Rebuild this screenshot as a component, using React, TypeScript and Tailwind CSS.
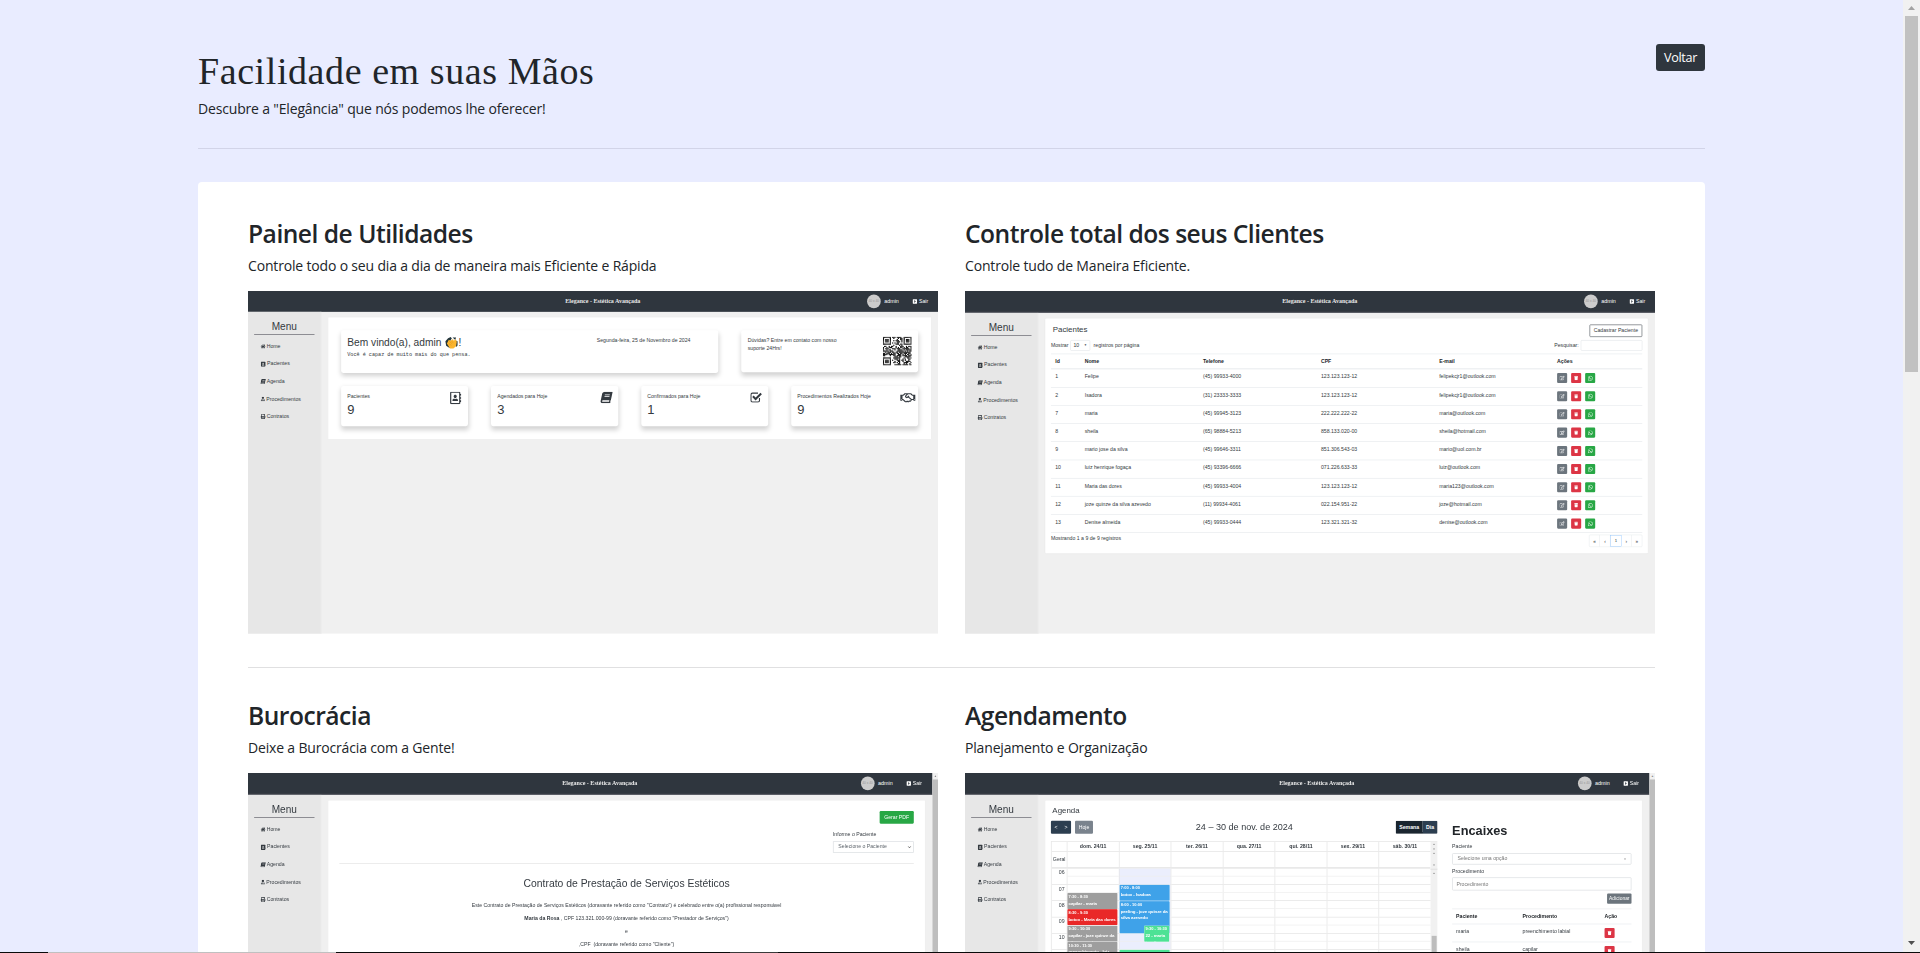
import type { ReactNode } from "react";
import {
  FaHome,
  FaAddressBook,
  FaRegAddressBook,
  FaBook,
  FaUserMd,
  FaPrint,
  FaRegHandshake,
  FaTrash,
  FaWhatsapp,
  FaRegEdit,
  FaCaretSquareRight,
} from "react-icons/fa";

const menuItems = [
  { icon: FaHome, label: "Home", style: "size-[14px]" },
  { icon: FaAddressBook, label: "Pacientes", style: "size-[15px]" },
  { icon: FaBook, label: "Agenda", style: "size-[14px] -skew-x-12" },
  { icon: FaUserMd, label: "Procedimentos", style: "size-[13px]" },
  { icon: FaPrint, label: "Contratos", style: "size-[14px]" },
];

function Shell({ children, scroll = false, bordered = false }: { children: ReactNode; scroll?: boolean; bordered?: boolean }) {
  return (
    <div className="h-[342.5px] w-[690px] overflow-hidden">
      <div className="flex h-[953px] w-[1921px] origin-top-left scale-[0.3595] bg-[#f0f0f0] font-['Liberation_Sans',Arial,sans-serif] text-[14.4px] text-[#343a40]">
        <div className="flex min-w-0 flex-1 flex-col">
          <header
            className={
              bordered
                ? "flex h-[61px] shrink-0 items-center border-b-[3px] border-[#5d6067] bg-[#2f363e]"
                : "flex h-[58px] shrink-0 items-center bg-[#2f363e]"
            }
          >
            <div className="flex-1" />
            <div className="w-[210px] translate-x-[46px] text-center font-['Liberation_Serif',serif] text-[16.8px] font-bold whitespace-nowrap text-[#e8e8e8]">
              Elegance - Estética Avançada
            </div>
            <div className="flex flex-1 items-center justify-end pr-[29px] pl-[10px] text-white">
              <span className="flex size-[38px] items-center justify-center rounded-full bg-[#cccccc] text-[9px] text-[#969696]">40 x 40</span>
              <span className="ml-[10px] text-[15px]">admin</span>
              <span className="ml-[38px] flex items-center gap-[4px] text-[14.4px]">
                <FaCaretSquareRight className="size-[14px]" />
                Sair
              </span>
            </div>
          </header>
          <div className="flex flex-1">
            <nav className="w-[204px] shrink-0 border-r-2 border-[#ececec] bg-[#e7e7e7] px-[17px] pt-[19px]">
              <div className="border-b-2 border-[#6b6b73] text-center text-[28px] leading-[43px]">Menu</div>
              <ul className="pt-[8px] pl-[18px]">
                {menuItems.map(({ icon: Icon, label, style }) => (
                  <li key={label} className="flex h-[48.7px] items-center gap-[3px] whitespace-nowrap">
                    <Icon className={style} />
                    {label}
                  </li>
                ))}
              </ul>
            </nav>
            <main className="min-w-0 flex-1 pt-[14px] pr-[20px] pl-[18px]">{children}</main>
          </div>
        </div>
        {scroll && (
          <div className="w-[17px] shrink-0 bg-[#f1f1f1]">
            <div className="flex h-[18px] items-center justify-center text-[8px] text-[#888]">▲</div>
            <div className="h-[935px] bg-[#bebebe]" />
          </div>
        )}
      </div>
    </div>
  );
}

const QR_SIZE = 25;
function isQrDark(x: number, y: number) {
  const corners = [
    [0, 0],
    [QR_SIZE - 7, 0],
    [0, QR_SIZE - 7],
  ];
  for (const [cx, cy] of corners) {
    const dx = x - cx;
    const dy = y - cy;
    if (dx >= -1 && dx <= 7 && dy >= -1 && dy <= 7) {
      const ring = Math.max(Math.abs(dx - 3), Math.abs(dy - 3));
      return ring === 3 || ring <= 1;
    }
  }
  return (x * x * 7 + y * y * 13 + x * y * 5 + ((x * 31) ^ (y * 17))) % 5 < 3;
}

function QrCode() {
  const cells: ReactNode[] = [];
  for (let y = 0; y < QR_SIZE; y++) {
    for (let x = 0; x < QR_SIZE; x++) {
      if (isQrDark(x, y)) cells.push(<rect key={`${x}-${y}`} x={x} y={y} width="1.05" height="1.05" />);
    }
  }
  return (
    <svg viewBox="0 0 25 25" className="size-[80px] shrink-0" fill="#111">
      {cells}
    </svg>
  );
}

function ClapIcon() {
  return (
    <svg viewBox="0 0 34 34" className="mx-[2px] size-[36px]">
      <path d="M1 13 8 5l7-3 3 4-4 5 3 18-6 1-8-5z" fill="#24363c" />
      <path d="M20 3h9l-2 7zM28 11l5 2v11l-4 4z" fill="#24363c" />
      <path d="m5 19 5-10 5 3 6-5 2 5 5-4 3 6-2 12-7 6H13z" fill="#fbb52f" />
      <path d="m11 13 8 7M16 11l6 7M10 19l7 5" stroke="#d98a17" strokeWidth="1.2" />
    </svg>
  );
}

function CheckBoxIcon({ className }: { className?: string }) {
  return (
    <svg viewBox="0 0 32 30" className={className} fill="none" stroke="currentColor">
      <path d="M25 17v7a4 4 0 0 1-4 4H6a4 4 0 0 1-4-4V8a4 4 0 0 1 4-4h15" strokeWidth="3" />
      <path d="m7.500 12.500 7 7.500L29.500 5" strokeWidth="5.500" />
    </svg>
  );
}

const stats = [
  { label: "Pacientes", value: 9, icon: FaRegAddressBook, style: "size-[35px]" },
  { label: "Agendados para Hoje", value: 3, icon: FaBook, style: "size-[32px] -skew-x-12" },
  { label: "Confirmados para Hoje", value: 1, icon: CheckBoxIcon, style: "h-[31px] w-[33px]" },
  { label: "Procedimentos Realizados Hoje", value: 9, icon: FaRegHandshake, style: "-mr-[10px] h-[34px] w-[43px]" },
];

function DashboardPreview() {
  return (
    <Shell>
      <div className="flex flex-col gap-[36px] border border-[#e2e2e2] bg-white px-[36px] py-[36px]">
        <div className="flex items-start gap-[64px]">
          <div className="flex h-[119px] w-[1049px] rounded-[6px] pl-[17px] shadow-[0_8px_16px_rgba(0,0,0,0.18)]">
            <div className="w-[694px] pt-[16px]">
              <div className="flex h-[38px] items-center text-[28.4px]">
                Bem vindo(a), admin&nbsp;
                <ClapIcon />!
              </div>
              <div className="font-['Liberation_Mono',monospace] text-[14.3px] leading-[30px]">Você é capaz de muito mais do que pensa.</div>
            </div>
            <div className="pt-[17px] leading-[22px]">Segunda-feira, 25 de Novembro de 2024</div>
          </div>
          <div className="flex h-[117px] flex-1 justify-between rounded-[6px] pt-[18px] pr-[18px] pl-[18px] shadow-[0_8px_16px_rgba(0,0,0,0.18)]">
            <div className="w-[260px] leading-[22px]">Dúvidas? Entre em contato com nosso suporte 24Hrs!</div>
            <QrCode />
          </div>
        </div>
        <div className="grid grid-cols-4 gap-[64px]">
          {stats.map(({ label, value, icon: Icon, style }, i) => (
            <div key={i} className="flex h-[112px] justify-between rounded-[6px] pt-[16px] pr-[17px] pl-[17px] whitespace-nowrap shadow-[0_8px_16px_rgba(0,0,0,0.18)]">
              <div>
                <div className="leading-[25px]">{label}</div>
                <div className="text-[36px] leading-[50px]">{value}</div>
              </div>
              <Icon className={style} />
            </div>
          ))}
        </div>
      </div>
    </Shell>
  );
}

const patients = [
  ["1", "Felipe", "(45) 99933-4000", "123.123.123-12", "felipekcjr1@outlook.com"],
  ["2", "Isadora", "(31) 23333-3333", "123.123.123-12", "felipekcjr1@outlook.com"],
  ["7", "maria", "(45) 99945-3123", "222.222.222-22", "maria@outlook.com"],
  ["8", "sheila", "(65) 98884-5213", "858.133.020-00", "sheila@hotmail.com"],
  ["9", "mario jose da silva", "(45) 99646-3311", "851.306.543-03", "mario@uol.com.br"],
  ["10", "luiz henrique fogaça", "(45) 93396-6666", "071.226.633-33", "luiz@outlook.com"],
  ["11", "Maria das dores", "(45) 99933-4004", "123.123.123-12", "maria123@outlook.com"],
  ["12", "joze quinze da silva azevedo", "(11) 99934-4061", "022.154.951-22", "joze@hotmail.com"],
  ["13", "Denise almeida", "(45) 99933-0444", "123.321.321-32", "denise@outlook.com"],
];

function PatientsPreview() {
  return (
    <Shell bordered>
      <div className="h-[656px] rounded-[4px] border border-[#e2e2e2] bg-white px-[16px] pt-[17px]">
        <div className="flex h-[34px] items-center justify-between">
          <div className="pb-[8px] pl-[5px] text-[22px]">Pacientes</div>
          <div className="flex h-[35px] w-[147px] items-center justify-center rounded-[3px] border-2 border-[#6d7278] whitespace-nowrap">Cadastrar Paciente</div>
        </div>
        <div className="mt-[10px] flex h-[29px] items-center">
          Mostrar
          <span className="mr-[10px] ml-[5px] flex h-[29px] w-[55px] items-center justify-between rounded-[3px] border border-[#ced4da] px-[8px]">
            10 <span className="text-[8px]">▼</span>
          </span>
          registros por página
          <span className="mr-[6px] ml-auto">Pesquisar:</span>
          <span className="h-[29px] w-[171px] rounded-[3px] border border-[#ced4da]" />
        </div>
        <div className="mt-[8px] grid h-[44px] grid-cols-[82px_329px_328px_329px_328px_1fr] items-center border-t-2 border-b-3 border-[#e9ecef] font-bold text-[#212529] *:pl-3">
          {["Id", "Nome", "Telefone", "CPF", "E-mail", "Ações"].map((h) => (
            <span key={h}>{h}</span>
          ))}
        </div>
        {patients.map((row) => (
          <div key={row[0]} className="grid h-[50.6px] grid-cols-[82px_329px_328px_329px_328px_1fr] items-center border-b-2 border-[#e9ecef] *:pl-3 last:border-0">
            {row.map((cell, i) => (
              <span key={i} className="pb-[7px] whitespace-nowrap">
                {cell}
              </span>
            ))}
            <span className="flex gap-[11px] text-white">
              <span className="flex size-[28px] items-center justify-center rounded-[3px] bg-[#6c757d]">
                <FaRegEdit className="size-[14px]" />
              </span>
              <span className="flex size-[28px] items-center justify-center rounded-[3px] bg-[#dc3545]">
                <FaTrash className="size-[12px]" />
              </span>
              <span className="flex size-[28px] items-center justify-center rounded-[3px] bg-[#28a745]">
                <FaWhatsapp className="size-[15px]" />
              </span>
            </span>
          </div>
        ))}
        <div className="flex justify-between pt-[5px]">
          <span className="leading-[20px]">Mostrando 1 a 9 de 9 registros</span>
          <span className="flex h-[34px] w-[148px] rounded-[3px] border border-[#dee2e6]">
            {["«", "‹", "1", "›", "»"].map((p) => (
              <span
                key={p}
                className={
                  p === "1"
                    ? "flex flex-1 items-center justify-center border border-[#80bdff] text-[12px]"
                    : "flex flex-1 items-center justify-center border-r border-[#dee2e6] text-[13px] last:border-0"
                }
              >
                {p}
              </span>
            ))}
          </span>
        </div>
      </div>
    </Shell>
  );
}

function ContractPreview() {
  return (
    <Shell bordered scroll>
      <div className="h-[900px] border border-[#e2e2e2] bg-white px-[31px] pt-[30px]">
        <div className="flex flex-col items-end">
          <div className="flex h-[35px] w-[95px] items-center justify-center rounded-[3px] bg-[#28a745] text-white">Gerar PDF</div>
          <div className="w-[225px]">
            <div className="pt-[18px] leading-[22px]">Informe o Paciente</div>
            <div className="mt-[9px] flex h-[32px] items-center justify-between border-2 border-[#dcdfe2] pr-[5px] pl-[13px] text-[#5c636a]">
              Selecione o Paciente
              <svg viewBox="0 0 10 6" className="h-[6px] w-[10px]" fill="none" stroke="#333" strokeWidth="2">
                <path d="m1 1 4 4 4-4" />
              </svg>
            </div>
          </div>
        </div>
        <div className="mt-[29px] border-t-2 border-[#e5e5e5]" />
        <div className="pt-[33px] text-center text-[28.9px] leading-[40px]">Contrato de Prestação de Serviços Estéticos</div>
        <div className="pt-[24px] text-center leading-[36.3px]">
          <p>Este Contrato de Prestação de Serviços Estéticos (doravante referido como "Contrato") é celebrado entre o(a) profissional responsável</p>
          <p>
            <b>Maria da Rosa</b> , CPF 123.321.000-99 (doravante referido como "Prestador de Serviços")
          </p>
          <p>e</p>
          <p>,CPF &nbsp;(doravante referido como "Cliente")</p>
        </div>
      </div>
    </Shell>
  );
}

const weekDays = ["dom. 24/11", "seg. 25/11", "ter. 26/11", "qua. 27/11", "qui. 28/11", "sex. 29/11", "sáb. 30/11"];
const hours = ["06", "07", "08", "09", "10", "11"];

function CalendarEvent({ time, title, className }: { time: string; title: string; className: string }) {
  return (
    <div className={`absolute overflow-hidden rounded-[3px] border border-white/60 pl-[3px] font-bold text-white ${className}`}>
      <div className="text-[11px] leading-[19px] whitespace-nowrap">{time}</div>
      <div className="text-[12.2px] leading-[18px] tracking-[-0.25px]">{title}</div>
    </div>
  );
}

function AgendaPreview() {
  return (
    <Shell bordered scroll>
      <div className="h-[900px] border border-[#e2e2e2] bg-white px-[16px] pt-[12px]">
        <div className="pl-[4px] text-[22px] leading-[32px]">Agenda</div>
        <div className="flex gap-[41px] pt-[13px]">
          <div className="w-[1075px] shrink-0">
            <div className="flex h-[36px] items-center justify-between">
              <div className="flex gap-[11px] text-white">
                <span className="flex h-[36px] w-[56px] items-center justify-around rounded-[3px] bg-[#2c3e50]">
                  <span>&lt;</span>
                  <span>&gt;</span>
                </span>
                <span className="flex h-[36px] w-[50px] items-center justify-center rounded-[3px] bg-[#7a838d]">Hoje</span>
              </div>
              <div className="text-[25.2px]">24 – 30 de nov. de 2024</div>
              <div className="flex h-[36px] overflow-hidden rounded-[3px] font-bold text-white">
                <span className="flex w-[75px] items-center justify-center bg-[#1a252f]">Semana</span>
                <span className="flex w-[41px] items-center justify-center bg-[#2c3e50]">Dia</span>
              </div>
            </div>
            <div className="mt-[21px] flex border-2 border-r-0 border-[#e4e4e4]">
              <div className="flex-1">
                <div className="grid h-[27px] grid-cols-[42px_repeat(7,1fr)] border-b-2 border-[#e4e4e4] text-center leading-[25px] font-bold">
                  <span />
                  {weekDays.map((d) => (
                    <span key={d} className="border-l-2 border-[#e4e4e4]">
                      {d}
                    </span>
                  ))}
                </div>
                <div className="grid h-[47px] grid-cols-[42px_repeat(7,1fr)] border-b-[4px] border-[#e4e4e4]">
                  <span className="text-center leading-[43px]">Geral</span>
                  {weekDays.map((d) => (
                    <span key={d} className="border-l-2 border-[#e4e4e4]" />
                  ))}
                </div>
                <div className="relative">
                  {hours.map((h) => (
                    <div key={h} className="grid h-[45.2px] grid-cols-[42px_repeat(7,1fr)] border-b-2 border-[#e4e4e4]">
                      <span className="pr-[6px] text-right leading-[22px]">{h}</span>
                      {weekDays.map((d, i) => (
                        <span key={d} className={i === 1 ? "border-l-2 border-[#e4e4e4] bg-[#ebeefd]" : "border-l-2 border-[#e4e4e4]"}>
                          <span className="block h-[22px] border-b-2 border-[#eeeeee]" />
                        </span>
                      ))}
                    </div>
                  ))}
                  <CalendarEvent className="top-[67px] left-[43px] h-[46px] w-[141px] bg-[#9e9e9e]" time="7:30 - 8:30" title="capilar - maria" />
                  <CalendarEvent className="top-[112px] left-[43px] h-[46px] w-[141px] bg-[#e92828]" time="8:30 - 9:30" title="botox - Maria das dores" />
                  <CalendarEvent className="top-[158px] left-[43px] h-[46px] w-[141px] bg-[#9e9e9e]" time="9:30 - 10:30" title="capilar - joze quinze da silva azevedo" />
                  <CalendarEvent className="top-[203px] left-[43px] h-[46px] w-[141px] bg-[#9e9e9e]" time="10:30 - 11:30" title="preenchimento - luiz" />
                  <CalendarEvent className="top-[44px] left-[188px] h-[46px] w-[141px] bg-[#3fa2e9]" time="7:00 - 8:00" title="botox - Isadora" />
                  <CalendarEvent className="top-[90px] left-[188px] h-[91px] w-[141px] bg-[#3fa2e9]" time="8:00 - 10:00" title="peeling - joze quinze da silva azevedo" />
                  <CalendarEvent className="top-[158px] left-[257px] h-[46px] w-[71px] bg-[#4de295]" time="9:30 - 10:30" title="22 - maria josefina" />
                  <div className="absolute top-[225px] left-[188px] h-[46px] w-[141px] rounded-[3px] border border-white/60 bg-[#4de295]" />
                </div>
              </div>
              <div className="flex w-[19px] flex-col items-center bg-[#f1f1f1] text-[7px] text-[#777]">
                <span className="flex h-[27px] flex-col justify-around">
                  <span>▲</span>
                  <span>▼</span>
                </span>
                <span className="flex h-[47px] flex-col justify-between pb-[5px]">
                  <span>▲</span>
                  <span>▼</span>
                </span>
                <span className="h-[187px] w-full border-t-4 border-[#e4e4e4] pt-[5px] text-center">▲</span>
                <span className="w-[14px] flex-1 bg-[#bdbdbd]" />
              </div>
            </div>
          </div>
          <div className="w-[499px]">
            <div className="text-[35.5px] leading-[56px] font-bold text-[#212529]">Encaixes</div>
            <div className="pt-[5px] leading-[22px]">Paciente</div>
            <div className="mt-[7px] flex h-[32px] items-center justify-between rounded-[3px] border-2 border-[#dcdfe2] px-[13px] text-[#777]">
              Selecione uma opção <span className="text-[7px]">▼</span>
            </div>
            <div className="mt-[6px] leading-[22px]">Procedimento</div>
            <div className="mt-[7px] flex h-[37px] items-center rounded-[3px] border-2 border-[#dcdfe2] px-[10px] text-[#777]">Procedimento</div>
            <div className="mt-[8px] ml-auto flex h-[29px] w-[68px] items-center justify-center rounded-[3px] bg-[#6c757d] text-[13.6px] text-white">Adicionar</div>
            <div className="mt-[13px] grid h-[44px] grid-cols-[185px_228px_1fr] items-center border-y-2 border-[#e9ecef] pl-[11px] font-bold text-[#212529]">
              <span>Paciente</span>
              <span>Procedimento</span>
              <span>Ação</span>
            </div>
            {[
              ["maria", "preenchimento labial"],
              ["sheila", "capilar"],
            ].map(([name, procedure]) => (
              <div key={name} className="grid h-[50px] grid-cols-[185px_228px_1fr] items-center border-b-2 border-[#e9ecef] pl-[11px]">
                <span className="pb-[6px]">{name}</span>
                <span className="pb-[6px]">{procedure}</span>
                <span className="flex size-[28px] items-center justify-center rounded-[3px] bg-[#dc3545] text-white">
                  <FaTrash className="size-[12px]" />
                </span>
              </div>
            ))}
          </div>
        </div>
      </div>
    </Shell>
  );
}

function Feature({ title, text, children }: { title: string; text: string; children: ReactNode }) {
  return (
    <section className="w-[690px]">
      <h2 className="pt-[2px] text-[24.6px] leading-[36px] font-semibold tracking-[-0.5px] whitespace-nowrap">{title}</h2>
      <p className="mt-[2px] mb-[13px] text-[14px] leading-[24px] tracking-[-0.17px] whitespace-nowrap">{text}</p>
      {children}
    </section>
  );
}

export default function App() {
  return (
    <div className="relative flex h-[953px] w-[1920px] overflow-hidden bg-[#e9ecff] font-['Open_Sans','Noto_Sans',sans-serif] text-[#212529]">
      <div className="h-[953px] w-[1903px] overflow-hidden pr-[198px] pl-[198px]">
        <header className="flex h-[148px] items-start justify-between pt-[44px]">
          <div>
            <h1 className="pt-px font-['Liberation_Serif',serif] text-[38px] leading-[52px] tracking-[0.58px] whitespace-nowrap">Facilidade em suas Mãos</h1>
            <p className="text-[14px] leading-[24px] tracking-[-0.17px] whitespace-nowrap">Descubre a "Elegância" que nós podemos lhe oferecer!</p>
          </div>
          <button className="flex h-[27px] w-[49px] items-center justify-center rounded-[3px] bg-[#2f363e] pt-[2px] text-[12.6px] tracking-[-0.3px] text-white">Voltar</button>
        </header>
        <div className="border-t border-[#d2d4e8]" />
        <div className="mt-[33px] h-[900px] rounded-t-[4px] bg-white px-[50px]">
          <div className="flex justify-between pt-[32px]">
            <Feature title="Painel de Utilidades" text="Controle todo o seu dia a dia de maneira mais Eficiente e Rápida">
              <DashboardPreview />
            </Feature>
            <Feature title="Controle total dos seus Clientes" text="Controle tudo de Maneira Eficiente.">
              <PatientsPreview />
            </Feature>
          </div>
          <div className="mt-[33.5px] border-t border-[#e0e0e1]" />
          <div className="flex justify-between pt-[28px]">
            <Feature title="Burocrácia" text="Deixe a Burocrácia com a Gente!">
              <ContractPreview />
            </Feature>
            <Feature title="Agendamento" text="Planejamento e Organização">
              <AgendaPreview />
            </Feature>
          </div>
        </div>
      </div>
      <div className="flex w-[17px] flex-col items-center justify-between bg-[#f1f1f1]">
        <div className="flex w-full flex-col items-center">
          <svg viewBox="0 0 17 16" className="h-[16px] w-[17px]" fill="#a3a3a3">
            <path d="M5 10h7L8.500 6z" />
          </svg>
          <div className="h-[356px] w-[13px] bg-[#c1c1c1]" />
        </div>
        <svg viewBox="0 0 17 16" className="mb-[2px] h-[16px] w-[17px]" fill="#505050">
          <path d="M5 6h7l-3.500 4z" />
        </svg>
      </div>
      <div className="absolute bottom-0 left-0 flex h-px w-full bg-[#0a0a0a]">
        <div className="ml-[48px] w-[288px] bg-[#c0c0c0]" />
        <div className="ml-[394px] w-[48px] bg-[#3a3a3a]" />
      </div>
    </div>
  );
}
